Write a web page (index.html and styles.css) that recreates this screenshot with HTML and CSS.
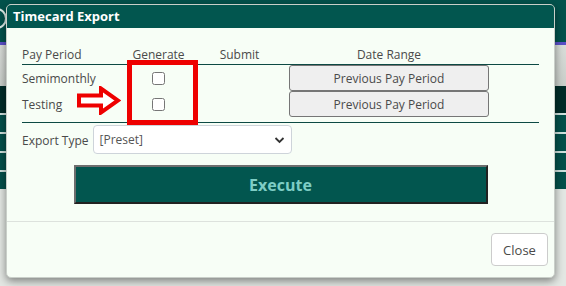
FILE: index.html
```html
<!DOCTYPE html>
<html lang="en">
<head>
    <meta charset="UTF-8">
    <title>Timecard Export</title>
    <link rel="stylesheet" href="styles.css">
</head>
<body>
<div class="app">
    <div class="band band-top"><span class="logo"></span></div>
    <div class="band band-purple"></div>
    <div class="band band-grey"></div>
    <div class="band band-dark"></div>
    <div class="band band-tab"></div>
    <div class="band band-tab"></div>
    <div class="band band-tab"></div>
    <div class="band band-tab"></div>
</div>

<div class="modal">
    <div class="modal-header">Timecard Export</div>
    <div class="modal-body">
        <div class="periods">
            <div class="grid-row head">
                <div class="cell left">Pay Period</div>
                <div class="cell">Generate</div>
                <div class="cell">Submit</div>
                <div class="cell">Date Range</div>
                <div class="cell"></div>
            </div>
            <div class="grid-row">
                <div class="cell left">Semimonthly</div>
                <div class="cell"><input type="checkbox"></div>
                <div class="cell"></div>
                <div class="cell"><button class="range-btn">Previous Pay Period</button></div>
                <div class="cell"></div>
            </div>
            <div class="grid-row">
                <div class="cell left">Testing</div>
                <div class="cell"><input type="checkbox"></div>
                <div class="cell"></div>
                <div class="cell"><button class="range-btn">Previous Pay Period</button></div>
                <div class="cell"></div>
            </div>
            <div class="rule"></div>

            <!-- annotation -->
            <div class="mark-box"></div>
            <svg class="mark-arrow" width="44" height="29" viewBox="0 0 44 29">
                <path d="M2 9.5 H24 V2.5 L41 14.5 L24 26.5 V19.5 H2 Z" fill="#fff" stroke="#ee0000" stroke-width="4" stroke-linejoin="miter"/>
            </svg>
        </div>

        <div class="export-row">
            <span class="export-label">Export Type</span>
            <div class="fake-select">
                <span>[Preset]</span>
                <svg width="11" height="8" viewBox="0 0 11 8"><path d="M1.5 2 L5.5 6 L9.5 2" fill="none" stroke="#333" stroke-width="1.8"/></svg>
            </div>
        </div>

        <button class="execute">Execute</button>
    </div>
    <div class="modal-footer">
        <button class="close-btn">Close</button>
    </div>
</div>
</body>
</html>
```

FILE: styles.css
```css
body {
    margin: 0;
    font-family: "Open Sans", Arial, sans-serif;
    background-color: #e3e7e3;
    width: 566px;
    height: 286px;
    overflow: hidden;
    position: relative;
}
.app {
    display: flex;
    flex-direction: column;
}
.band-top {
    height: 42px;
    background-color: #03524c;
    position: relative;
}
.logo {
    position: absolute;
    left: -14px;
    top: 8px;
    width: 17px;
    height: 17px;
    border: 2px solid #dfeeea;
    border-radius: 50%;
}
.band-purple {
    height: 3px;
    background-color: #5b50c8;
}
.band-grey {
    height: 41px;
    background: linear-gradient(#d9ddd9, #c9cec9);
}
.band-dark {
    height: 27px;
    background-color: #012c28;
}
.band-tab {
    height: 17px;
    border-top: 2px solid #cfe1dd;
    background-color: #04504a;
}

.modal {
    position: absolute;
    left: 6px;
    top: 4px;
    width: 547px;
    border: 1px solid #c9cfc9;
    border-radius: 5px;
    background-color: #f7fef6;
    box-shadow: 0 3px 9px rgba(0, 0, 0, 0.45);
    overflow: hidden;
}
.modal-header {
    height: 23px;
    background-color: #02564f;
    color: #fff;
    font-weight: bold;
    font-size: 13px;
    line-height: 23px;
    padding-left: 6px;
}
.modal-body {
    padding: 16px 15px 17px 15px;
    display: flex;
    flex-direction: column;
}

.periods {
    position: relative;
    color: #4a4a4a;
    font-size: 12px;
}
.grid-row {
    display: grid;
    grid-template-columns: 105px 63px 99px 200px 1fr;
    height: 26px;
    align-items: center;
}
.grid-row.head {
    height: 20px;
    border-bottom: 1px solid #0d4a44;
}
.cell {
    text-align: center;
    display: flex;
    justify-content: center;
    align-items: center;
}
.cell.left {
    justify-content: flex-start;
}
.cell input {
    margin: 0;
    width: 13px;
    height: 13px;
}
.range-btn {
    width: 200px;
    height: 26px;
    font-family: "Open Sans", Arial, sans-serif;
    font-size: 12px;
    color: #4a4a4a;
    background-color: #efefef;
    border: 1px solid #767676;
    border-radius: 3px;
    padding: 0;
}
.rule {
    margin-top: 5px;
    border-top: 1px solid #0d4a44;
}
.mark-box {
    position: absolute;
    left: 105px;
    top: 16px;
    width: 61px;
    height: 55px;
    border: 5px solid #ee0000;
}
.mark-arrow {
    position: absolute;
    left: 55px;
    top: 42px;
}

.export-row {
    display: flex;
    align-items: center;
    gap: 4px;
    margin-top: 2px;
    color: #4a4a4a;
    font-size: 12px;
}
.export-label {
    padding-top: 2px;
}
.fake-select {
    width: 185px;
    height: 27px;
    background-color: #fff;
    border: 1px solid #ced4da;
    border-radius: 4px;
    display: flex;
    align-items: center;
    justify-content: space-between;
    padding: 0 6px 0 6px;
    color: #555;
}

.execute {
    align-self: center;
    margin-top: 11px;
    width: 414px;
    height: 39px;
    background-color: #02564f;
    border: 2px solid;
    border-color: #6e6e6e #222 #222 #6e6e6e;
    color: #7ecdc5;
    font-family: "Open Sans", Arial, sans-serif;
    font-weight: bold;
    font-size: 16px;
    padding: 0 0 0 0;
    line-height: 1;
}

.modal-footer {
    border-top: 1px solid #dde2dd;
    padding: 11px 6px 11px 0;
    display: flex;
    justify-content: flex-end;
}
.close-btn {
    width: 57px;
    height: 33px;
    background-color: #fff;
    border: 1px solid #ccc;
    border-radius: 4px;
    font-family: "Open Sans", Arial, sans-serif;
    font-size: 13px;
    color: #4a4a4a;
    padding: 0;
}
```
